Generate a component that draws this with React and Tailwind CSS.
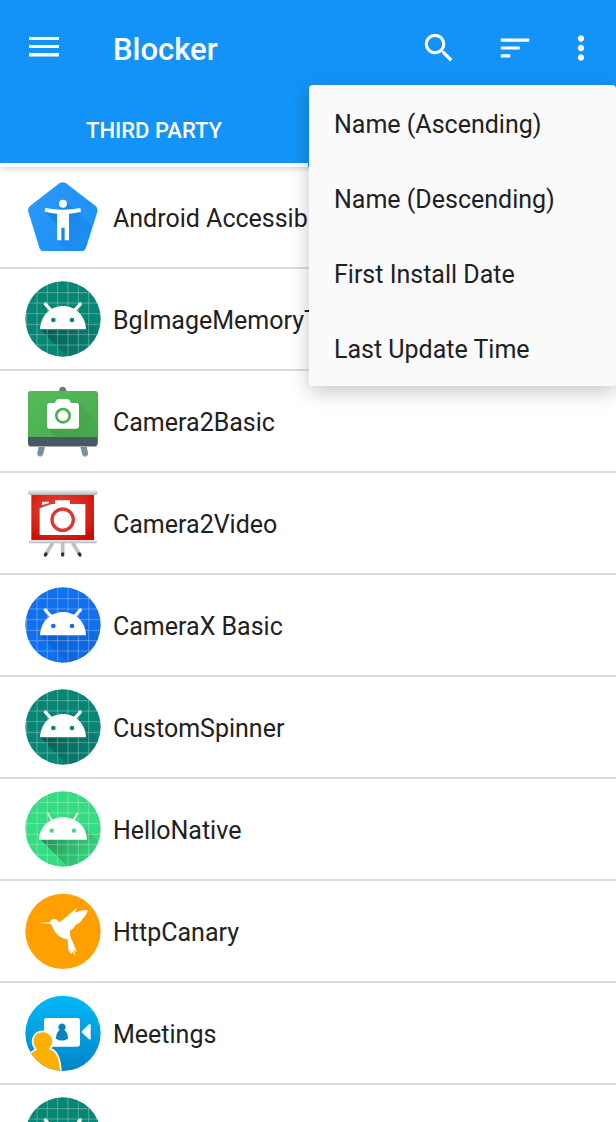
import React from "react";
import { MdSearch, MdSort, MdMoreVert } from "react-icons/md";

function IconFrame({ children, viewBox = "45 27 228 228" }) {
  return (
    <svg viewBox={viewBox} className="size-[76px] shrink-0" aria-hidden="true">
      {children}
    </svg>
  );
}

function RobotIcon({ id, color, shade, thin }) {
  return (
    <IconFrame>
      <defs>
        <clipPath id={id}>
          <circle cx="159" cy="141" r="113" />
        </clipPath>
        <linearGradient id={id + "-shade"} gradientUnits="userSpaceOnUse" x1="110" y1="160" x2="225" y2="235">
          <stop offset="0" stopColor="#000" stopOpacity={shade} />
          <stop offset="1" stopColor="#000" stopOpacity="0.05" />
        </linearGradient>
      </defs>
      <g clipPath={`url(#${id})`}>
        <rect x="45" y="27" width="228" height="228" fill={color} />
        <path d="M90 171H228V140L290 202V290H209Z" fill={`url(#${id}-shade)`} />
        <path
          d="M50 0V270M81 0V270M112 0V270M143 0V270M174 0V270M205 0V270M236 0V270M40 62H280M40 93H280M40 125H280M40 157H280M40 188H280M40 219H280"
          stroke="#fff"
          strokeOpacity="0.36"
          strokeWidth="2.4"
        />
      </g>
      <circle cx="159" cy="141" r="112.5" fill="none" stroke="#000" strokeOpacity="0.05" strokeWidth="1" />
      {thin ? (
        <>
          <path d="M87 173C89 132 121 106 159 106S229 132 231 173Z" fill="#fff" />
          <path d="M114 95L125 114M202 95L191 114" stroke="#fff" strokeWidth="5" strokeLinecap="round" />
          <circle cx="125" cy="146" r="6.5" fill={color} />
          <circle cx="192" cy="146" r="6.5" fill={color} />
        </>
      ) : (
        <>
          <path d="M90 172C92 130 122 102 159 102S226 130 228 172Z" fill="#fff" />
          <path d="M106 96L122 114M211 96L195 114" stroke="#fff" strokeWidth="10" strokeLinecap="round" />
          <circle cx="130" cy="144" r="7" fill={color} />
          <circle cx="186" cy="144" r="7" fill={color} />
        </>
      )}
    </IconFrame>
  );
}

function AccessibilityIcon() {
  return (
    <IconFrame>
      <defs>
        <linearGradient id="a11y" x1="0" y1="0" x2="1" y2="1">
          <stop offset="0" stopColor="#2b98f8" />
          <stop offset="1" stopColor="#1a90f6" />
        </linearGradient>
        <linearGradient id="a11y-shade" gradientUnits="userSpaceOnUse" x1="120" y1="120" x2="230" y2="220">
          <stop offset="0" stopColor="#0b62c4" stopOpacity="0.4" />
          <stop offset="1" stopColor="#0b62c4" stopOpacity="0.05" />
        </linearGradient>
        <clipPath id="a11y-clip">
          <path d="M148 40Q158 33 168 40L256 107Q265 114 262 125L228 233Q224 244 213 244H102Q92 244 88 233L55 125Q52 114 61 107Z" />
        </clipPath>
      </defs>
      <g clipPath="url(#a11y-clip)">
        <rect x="45" y="27" width="228" height="228" fill="url(#a11y)" />
        <path d="M167 93L270 190V260H190L141 211V166L106 126L150 116Z" fill="url(#a11y-shade)" />
      </g>
      <circle cx="159" cy="101" r="12" fill="#fff" />
      <path d="M106 114Q159 124 211 114L213 125Q195 130 177 131V211H164V173H154V211H141V131Q123 130 104 125Z" fill="#fff" />
    </IconFrame>
  );
}

function CameraBoardIcon() {
  return (
    <IconFrame>
      <defs>
        <linearGradient id="board" x1="0" y1="0" x2="1" y2="1">
          <stop offset="0" stopColor="#56b95a" />
          <stop offset="1" stopColor="#48ac4c" />
        </linearGradient>
        <linearGradient id="board-shade" gradientUnits="userSpaceOnUse" x1="150" y1="120" x2="240" y2="200">
          <stop offset="0" stopColor="#2c8f35" stopOpacity="0.4" />
          <stop offset="1" stopColor="#2c8f35" stopOpacity="0.05" />
        </linearGradient>
      </defs>
      <path d="M147 54V49Q148 38 158 38T169 49V54Z" fill="#64808e" />
      <path d="M97 214L91 239M219 214L225 239" stroke="#a0a5a8" strokeWidth="18" strokeLinecap="round" />
      <path d="M97 210L91 236M219 210L225 236" stroke="#78909c" strokeWidth="17" strokeLinecap="round" />
      <rect x="54" y="54" width="209" height="165" rx="10" fill="#a9adaf" />
      <rect x="54" y="51" width="209" height="165" rx="10" fill="#455a64" />
      <path d="M54 189V61Q54 51 64 51H253Q263 51 263 61V189Z" fill="url(#board)" />
      <path d="M207 90L263 144V189H137L112 163Z" fill="url(#board-shade)" />
      <path d="M119 87H134L140 77Q142 75 145 75H172Q175 75 177 77L183 87H199Q207 87 207 95V156Q207 164 199 164H119Q111 164 111 156V95Q111 87 119 87Z" fill="#fff" />
      <circle cx="159" cy="125" r="20" fill="none" stroke="#4caf50" strokeWidth="8" />
    </IconFrame>
  );
}

function VideoBoardIcon() {
  return (
    <IconFrame>
      <defs>
        <radialGradient id="screen" cx="0.45" cy="0.35" r="0.75">
          <stop offset="0" stopColor="#ee4a42" />
          <stop offset="1" stopColor="#cc0c02" />
        </radialGradient>
        <linearGradient id="rail" x1="0" y1="0" x2="0" y2="1">
          <stop offset="0" stopColor="#f0eff3" />
          <stop offset="1" stopColor="#b4b3ba" />
        </linearGradient>
      </defs>
      <path d="M128 201L108 234M188 201L208 234M158 201V234" stroke="#bfc1c2" strokeWidth="11" />
      <path d="M108 234L106 237M208 234L210 237M158 234V237" stroke="#333" strokeWidth="10" strokeLinecap="round" />
      <rect x="64" y="56" width="188" height="138" fill="url(#screen)" />
      <rect x="54" y="42" width="209" height="15" rx="6" fill="url(#rail)" />
      <rect x="56" y="192" width="205" height="10" rx="4" fill="url(#rail)" />
      <path d="M89 97L125 84H135V73H180V84H226V177H89Z" fill="#fff" />
      <path d="M96 77H117V81L96 88Z" fill="#fff" />
      <circle cx="158" cy="131" r="32" fill="none" stroke="#da3832" strokeWidth="10" />
    </IconFrame>
  );
}

function BirdIcon() {
  return (
    <IconFrame>
      <circle cx="159" cy="142" r="113" fill="#ffa000" />
      <path
        d="M84 117L119 115C122 107 128 104 135 105C141 106 145 110 148 115C158 108 166 101 176 92L201 71L194 87C204 81 217 78 233 78C231 88 226 97 218 104C214 112 207 118 197 122C193 130 187 136 180 140C178 148 181 158 188 174L201 204L192 197L195 215L187 203L183 211L175 197C174 185 175 177 172 166C154 163 142 154 133 141C129 132 127 125 120 119Z"
        fill="#fff"
      />
    </IconFrame>
  );
}

function MeetingIcon() {
  return (
    <IconFrame>
      <defs>
        <linearGradient id="meet" x1="0" y1="0" x2="0" y2="1">
          <stop offset="0" stopColor="#02b9f8" />
          <stop offset="1" stopColor="#0284c8" />
        </linearGradient>
        <clipPath id="meet-clip">
          <circle cx="159" cy="142" r="113" />
        </clipPath>
      </defs>
      <g clipPath="url(#meet-clip)">
        <rect x="45" y="28" width="228" height="228" fill="url(#meet)" />
        <rect x="102" y="96" width="108" height="86" rx="8" fill="#fff" />
        <path d="M217 134L237 115Q242 112 242 118V157Q242 164 237 160L217 141Q214 138 217 134Z" fill="#fff" />
        <path d="M149 132A11 11 0 1 1 163 132Q174 140 174 158Q156 169 138 158Q138 140 149 132Z" fill="#0783bf" />
        <path
          d="M54 206L77 190C58 166 71 136 98 136S140 168 120 188C143 195 151 219 153 262H80Z"
          fill="#ffb000"
          stroke="#fff"
          strokeWidth="5"
        />
      </g>
    </IconFrame>
  );
}

const apps = [
  { name: "Android Accessibility Suite", icon: <AccessibilityIcon /> },
  { name: "BgImageMemoryTest", icon: <RobotIcon id="bg" color="#088675" shade="0.32" /> },
  { name: "Camera2Basic", icon: <CameraBoardIcon /> },
  { name: "Camera2Video", icon: <VideoBoardIcon /> },
  { name: "CameraX Basic", icon: <RobotIcon id="camerax" color="#1070ee" shade="0.14" /> },
  { name: "CustomSpinner", icon: <RobotIcon id="spinner" color="#088675" shade="0.32" /> },
  { name: "HelloNative", icon: <RobotIcon id="native" color="#35dc82" shade="0.32" thin /> },
  { name: "HttpCanary", icon: <BirdIcon /> },
  { name: "Meetings", icon: <MeetingIcon /> },
  { name: "MyApplication", icon: <RobotIcon id="last" color="#088675" shade="0.32" /> },
];

const sortOptions = ["Name (Ascending)", "Name (Descending)", "First Install Date", "Last Update Time"];

export default function App() {
  return (
    <div className="relative flex h-screen flex-col overflow-hidden bg-white font-['Roboto',sans-serif] text-[#212121]">
      <header className="z-10 shrink-0 bg-[#1393f7] text-white shadow-[0_1px_6px_rgba(0,0,0,0.2)]">
        <div className="flex h-[95px] items-center pr-4 pl-[25px]">
          <button type="button" aria-label="Open navigation" className="flex size-[38px] items-center justify-center">
            <svg viewBox="0 0 30 22" className="h-[22px] w-[30px]" fill="currentColor" aria-hidden="true">
              <rect width="30" height="3" />
              <rect y="8" width="30" height="3" />
              <rect y="16" width="30" height="3.5" />
            </svg>
          </button>
          <h1 className="ml-[50px] flex-1 pt-1 text-[31px] leading-9 font-medium">Blocker</h1>
          <button type="button" aria-label="Search">
            <MdSearch className="size-[38px]" />
          </button>
          <button type="button" aria-label="Sort" className="ml-[38px]">
            <MdSort className="size-[38px]" />
          </button>
          <button type="button" aria-label="More options" className="ml-7">
            <MdMoreVert className="size-[38px]" />
          </button>
        </div>
        <div role="tablist" className="grid grid-cols-2">
          <button
            type="button"
            role="tab"
            aria-selected="true"
            className="h-[72px] border-b-4 border-white pt-0.5 text-[22px] font-medium"
          >
            THIRD PARTY
          </button>
        </div>
      </header>

      <ul className="min-h-0 flex-1 overflow-hidden">
        {apps.map((app) => (
          <li key={app.name} className="flex h-[102px] items-center gap-3 border-b-2 border-[#dcdcdc] pl-[25px]">
            {app.icon}
            <span className="pt-1 text-[25px] leading-8">{app.name}</span>
          </li>
        ))}
      </ul>

      <div
        role="menu"
        className="absolute top-[85px] right-0 left-1/2 z-20 ml-px rounded bg-[#fafafa] pt-px shadow-[0_6px_20px_rgba(0,0,0,0.22)]"
      >
        {sortOptions.map((option) => (
          <button
            key={option}
            type="button"
            role="menuitem"
            className="block h-[75px] w-full px-[25px] pt-[3px] text-left text-[25px] leading-8"
          >
            {option}
          </button>
        ))}
      </div>
    </div>
  );
}
